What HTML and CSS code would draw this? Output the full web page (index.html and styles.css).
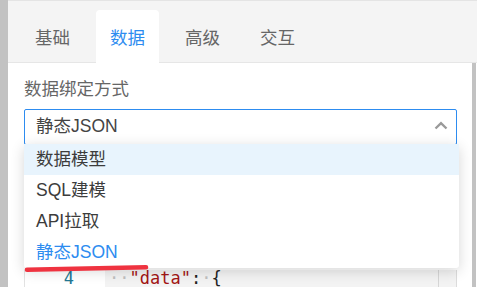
FILE: index.html
```html
<!DOCTYPE html>
<html lang="zh">
<head>
<meta charset="utf-8">
<link rel="stylesheet" href="styles.css">
</head>
<body>
<div class="app">
  <div class="sidebar"></div>
  <div class="main">
    <div class="tabs">
      <div class="tab">基础</div>
      <div class="tab active">数据</div>
      <div class="tab">高级</div>
      <div class="tab">交互</div>
    </div>
    <div class="body">
      <div class="panel">
        <div class="label">数据绑定方式</div>
        <div class="select">
          <span class="value">静态JSON</span>
          <svg class="arrow" width="14" height="9" viewBox="0 0 14 9"><path d="M1.5 7.5 L7 2.2 L12.5 7.5" fill="none" stroke="#9a9a9a" stroke-width="2.4"/></svg>
          <ul class="dropdown">
            <li class="item focus">数据模型</li>
            <li class="item">SQL建模</li>
            <li class="item">API拉取</li>
            <li class="item selected">静态JSON</li>
          </ul>
          <svg class="mark" width="130" height="20" viewBox="0 0 130 20"><path d="M3 10.8 Q 50 10 122 8.2" fill="none" stroke="#ef3340" stroke-width="4.6" stroke-linecap="round"/></svg>
        </div>
        <div class="editor">
          <div class="line">
            <span class="ln">4</span>
            <span class="code"><span class="ws">··</span><span class="str">"data"</span><span class="pun">:</span><span class="ws">·</span><span class="pun">{</span></span>
          </div>
        </div>
      </div>
      <div class="scrollbar"></div>
    </div>
  </div>
</div>
</body>
</html>
```

FILE: styles.css
```css
* { box-sizing: border-box; }
html, body { margin: 0; padding: 0; }
body {
  width: 477px;
  height: 287px;
  overflow: hidden;
  background: #fff;
  font-family: "Liberation Sans", "Noto Sans CJK SC", sans-serif;
  font-size: 17.5px;
  color: #444;
}
.app { display: flex; height: 287px; }
.sidebar { width: 8px; background: #c2c2c2; flex: none; }
.main { flex: 1; display: flex; flex-direction: column; min-width: 0; }
.tabs {
  height: 63px;
  flex: none;
  background: #f4f4f4;
  border-top: 1px solid #e4e4e4;
  border-bottom: 1px solid #e6e6e6;
  display: flex;
  align-items: flex-end;
  gap: 12px;
  padding-left: 13px;
}
.tab {
  width: 63px;
  height: 53px;
  margin-bottom: -1px;
  display: flex;
  align-items: center;
  justify-content: center;
  color: #666;
  border-radius: 4px 4px 0 0;
  padding-bottom: 1px;
}
.tab.active { background: #fff; color: #2d8cf0; }
.body { flex: 1; display: flex; min-height: 0; }
.panel { flex: 1; padding: 14px 15px 0 16px; position: relative; }
.scrollbar { width: 4px; background: #c2c2c2; margin-right: 1px; flex: none; }
.label { height: 24px; line-height: 24px; color: #666; margin-bottom: 8px; }
.select {
  position: relative;
  height: 36px;
  border: 1px solid #2d8cf0;
  border-radius: 2px;
  display: flex;
  align-items: center;
  padding: 0 11px;
  color: #444;
}
.value { flex: 1; line-height: 24px; padding-bottom: 2px; }
.arrow { margin-right: -3px; margin-top: -3px; }
.dropdown {
  position: absolute;
  left: -1px;
  top: 34px;
  width: calc(100% + 4px);
  margin: 0;
  padding: 0;
  list-style: none;
  background: #fff;
  border-radius: 3px;
  box-shadow: 0 3px 14px rgba(0, 0, 0, 0.16);
  z-index: 5;
}
.item {
  height: 31px;
  line-height: 30px;
  padding: 0 12px;
  color: #3c3c3c;
}
.item.focus { background: #e8f4fd; }
.item.selected { color: #2d8cf0; }
.mark { position: absolute; left: -1px; top: 149px; z-index: 6; }
.editor {
  margin-top: 125px;
  border-left: 1px solid #e2e2e2;
  border-right: 1px solid #dcdcdc;
  height: 17px;
  position: relative;
}
.editor::after {
  content: "";
  position: absolute;
  right: 17px;
  top: 0;
  bottom: 0;
  border-left: 1px solid #d6d6d6;
}
.line { display: flex; height: 17px; line-height: 17px; }
.ln {
  width: 80px;
  flex: none;
  text-align: right;
  padding-right: 31px;
  color: #237893;
  font-family: "DejaVu Sans Mono", monospace;
  font-size: 17px;
}
.code {
  flex: 1;
  background: #f3f3f3;
  font-family: "DejaVu Sans Mono", monospace;
  font-size: 17px;
  padding-left: 4px;
  color: #000;
}
.ws { color: #c0c0c0; }
.str { color: #a31515; }
.pun { color: #222; }
```
